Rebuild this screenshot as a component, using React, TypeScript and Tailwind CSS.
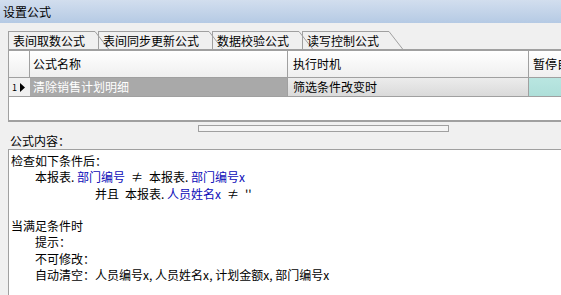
import React from "react";

const tabs = ["表间取数公式", "表间同步更新公式", "数据校验公式", "读写控制公式"];

const Tab = ({ label, first }: { label: string; first: boolean }) => (
  <div
    className={`relative flex h-[18px] items-center border-l border-t border-[#a0a0a0] pl-[4px] pr-[10px] leading-none ${
      first ? "" : "ml-[3px]"
    }`}
  >
    {label}
    <svg
      className="absolute left-full top-[-1px]"
      width="15"
      height="19"
      viewBox="0 0 15 19"
    >
      <path d="M0 0.5 L14 18.5" stroke="#a0a0a0" strokeWidth="1" fill="none" />
    </svg>
  </div>
);

const Blue = ({ children }: { children: React.ReactNode }) => (
  <span className="text-[#0c0cb8]">{children}</span>
);

const Dot = () => <span className="inline-block w-[6px]">.</span>;
const Neq = () => <span className="inline-block w-[24px] text-center">≠</span>;

export default function App() {
  return (
    <div className="h-[295px] w-[561px] overflow-hidden bg-[#f0f0f0] font-['Noto_Sans_CJK_SC',sans-serif] text-[12px] text-black">
      {/* 标题栏 */}
      <div className="flex h-[23px] items-center bg-gradient-to-b from-[#d2deee] to-[#b5cae4] pl-[3px] leading-none">
        设置公式
      </div>

      {/* 标签页 */}
      <div className="flex pl-[8px] pt-[8px]">
        {tabs.map((t, i) => (
          <Tab key={t} label={t} first={i === 0} />
        ))}
      </div>

      {/* 表格 */}
      <div className="ml-[8px] border-l border-t-2 border-[#a0a0a0] bg-white">
        <div className="flex h-[27px] border-b border-[#a0a0a0] bg-gradient-to-b from-white to-[#efefef] leading-none">
          <div className="w-[21px] shrink-0 border-r border-[#a0a0a0]" />
          <div className="flex w-[258px] shrink-0 items-center border-r border-[#a0a0a0] pl-[3px]">
            公式名称
          </div>
          <div className="flex w-[241px] shrink-0 items-center border-r border-[#a0a0a0] pl-[5px]">
            执行时机
          </div>
          <div className="flex flex-1 items-center whitespace-nowrap pl-[4px]">暂停自</div>
        </div>
        <div className="flex h-[19px] border-b border-[#a0a0a0] leading-none">
          <div className="flex w-[21px] shrink-0 items-center bg-[#f0f0f0] pl-[3px]">
            <span className="text-[9px]">1</span>
            <svg className="ml-[3px]" width="6" height="9" viewBox="0 0 6 9">
              <polygon points="0,0 5,4.5 0,9" fill="#000" />
            </svg>
          </div>
          <div className="flex w-[258px] shrink-0 items-center border-r border-[#a0a0a0] bg-[#a9a9a9] pl-[3px] text-white">
            清除销售计划明细
          </div>
          <div className="flex w-[241px] shrink-0 items-center border-r border-[#a0a0a0] bg-gradient-to-b from-[#ececec] to-[#dadada] pl-[5px]">
            筛选条件改变时
          </div>
          <div className="flex-1 bg-gradient-to-b from-[#b9e6e1] to-[#aedfd9]" />
        </div>
        <div className="h-[25px] border-b-2 border-[#a0a0a0]" />
      </div>

      {/* 横向滚动条 */}
      <div className="h-[12px] pt-[3px]">
        <div className="ml-[198px] h-[7px] w-[251px] border border-[#a0a0a0] bg-[#f4f4f4]" />
      </div>

      {/* 公式内容 */}
      <div className="pl-[10px] pt-[1px] leading-[12px]">公式内容：</div>

      <div className="ml-[8px] mt-[2px] h-[200px] border-l border-t border-[#a0a0a0] bg-white pl-[2px] pt-[3px] leading-[16.3px]">
        <div>检查如下条件后：</div>
        <div className="whitespace-nowrap pl-[24px]">
          本报表<Dot />
          <Blue>部门编号</Blue>
          <Neq />
          本报表<Dot />
          <Blue>部门编号x</Blue>
        </div>
        <div className="whitespace-nowrap pl-[84px]">
          并且<span className="inline-block w-[6px]" />
          本报表<Dot />
          <Blue>人员姓名x</Blue>
          <Neq />
          ''
        </div>
        <div className="h-[16.3px]" />
        <div>当满足条件时</div>
        <div className="pl-[24px]">提示：</div>
        <div className="pl-[24px]">不可修改：</div>
        <div className="whitespace-nowrap pl-[24px]">
          自动清空：人员编号x, 人员姓名x, 计划金额x, 部门编号x
        </div>
      </div>
    </div>
  );
}
